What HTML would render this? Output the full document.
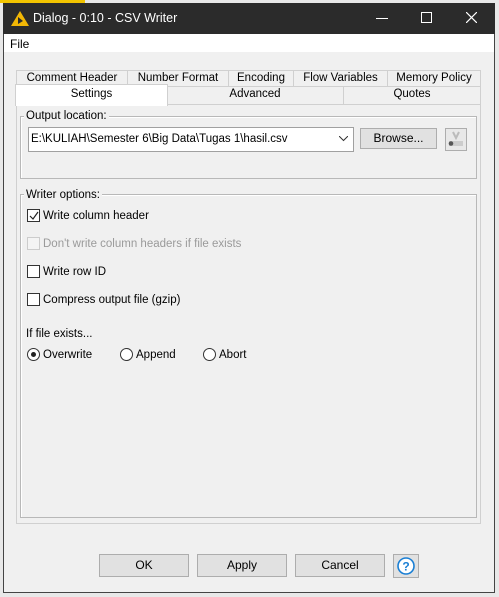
<!DOCTYPE html><html><head><style>
body{margin:0;width:499px;height:597px;background:#e8e8e8;font-family:"Liberation Sans",sans-serif;font-size:12px;color:#000;position:relative;overflow:hidden}
.a{position:absolute}
.win{left:3px;top:3px;width:490px;height:588px;border:1px solid #444;background:#f0f0f0}
.title{left:3px;top:3px;width:492px;height:31px;background:#2b2b2b;color:#fff;font-size:12px}
.tab{position:absolute;border:1px solid #d0d0d0;border-bottom:none;background:#f0f0f0;text-align:center;line-height:15px;font-size:11.5px}
.btn{position:absolute;background:#e1e1e1;border:1px solid #adadad;text-align:center;box-sizing:border-box}
.cb{position:absolute;width:13px;height:13px;border:1px solid #333;background:#fff;box-sizing:border-box}
.rd{position:absolute;width:13px;height:13px;border:1px solid #333;border-radius:50%;background:#fff;box-sizing:border-box}
.lbl{position:absolute;font-size:11.5px}
</style></head><body>
<div class="a" style="left:0;top:0;width:85px;height:3px;background:#f2c400"></div>
<div class="a win"></div>
<div class="a title">
<svg class="a" style="left:8px;top:8px" width="18" height="15"><polygon points="9,0 18,15 0,15" fill="#f2b705"/><polygon points="7,6 12,10 7,13" fill="#2b2b2b"/></svg>
<div class="a" style="left:30px;top:8px;font-size:12.5px">Dialog - 0:10 - CSV Writer</div>
<div class="a" style="left:373px;top:15px;width:12px;height:1px;background:#fff"></div>
<div class="a" style="left:418px;top:9px;width:9px;height:9px;border:1px solid #fff"></div>
<svg class="a" style="left:463px;top:9px" width="11" height="11"><path d="M0 0L11 11M11 0L0 11" stroke="#fff" stroke-width="1.2"/></svg>
</div>
<div class="a" style="left:4px;top:34px;width:490px;height:18px;background:#fff"></div>
<div class="a" style="left:10px;top:37px">File</div>

<div class="tab" style="left:16px;top:70px;width:110px">Comment Header</div>
<div class="tab" style="left:127px;top:70px;width:100px">Number Format</div>
<div class="tab" style="left:228px;top:70px;width:64px">Encoding</div>
<div class="tab" style="left:293px;top:70px;width:93px">Flow Variables</div>
<div class="tab" style="left:387px;top:70px;width:92px">Memory Policy</div>
<div class="tab" style="left:166px;top:86px;width:176px;height:18px">Advanced</div>
<div class="tab" style="left:343px;top:86px;width:136px;height:18px">Quotes</div>
<div class="a" style="left:16px;top:104px;width:463px;height:418px;border:1px solid #d0d0d0;background:#f0f0f0"></div>
<div class="tab" style="left:15px;top:84px;width:151px;height:21px;background:#fff;border-color:#d0d0d0;line-height:18px">Settings</div>

<div class="a" style="left:20px;top:116px;width:455px;height:61px;border:1px solid #b8b8b8;box-shadow:inset 1px 1px #fff"></div>
<div class="lbl" style="left:24px;top:110px;background:#f0f0f0;padding:0 2px">Output location:</div>
<div class="a" style="left:28px;top:127px;width:324px;height:23px;border:1px solid #a0a0a0;background:#fff"></div>
<div class="lbl" style="left:31px;top:133px">E:\KULIAH\Semester 6\Big Data\Tugas 1\hasil.csv</div>
<svg class="a" style="left:339px;top:136px" width="9" height="6"><path d="M0 0L4.5 4.5L9 0" stroke="#333" fill="none"/></svg>
<div class="btn" style="left:360px;top:128px;width:77px;height:21px;line-height:19px">Browse...</div>
<div class="btn" style="left:445px;top:128px;width:22px;height:23px;background:#e8e8e8"><svg width="20" height="21"><path d="M7 3L10 9L13 3" stroke="#bbb" fill="none" stroke-width="2"/><rect x="3" y="12" width="14" height="5" fill="#ccc"/><circle cx="5" cy="14.5" r="2.3" fill="#555"/></svg></div>

<div class="a" style="left:20px;top:194px;width:455px;height:322px;border:1px solid #b8b8b8;box-shadow:inset 1px 1px #fff"></div>
<div class="lbl" style="left:24px;top:189px;background:#f0f0f0;padding:0 2px">Writer options:</div>
<div class="cb" style="left:27px;top:209px"><svg class="a" style="left:1px;top:1px" width="10" height="10"><path d="M1 5L4 8L9 1" stroke="#222" fill="none" stroke-width="1.2"/></svg></div>
<div class="lbl" style="left:43px;top:210px">Write column header</div>
<div class="cb" style="left:27px;top:237px;border-color:#ccc;background:#f4f4f4"></div>
<div class="lbl" style="left:43px;top:238px;color:#9a9a9a">Don't write column headers if file exists</div>
<div class="cb" style="left:27px;top:265px"></div>
<div class="lbl" style="left:43px;top:266px">Write row ID</div>
<div class="cb" style="left:27px;top:293px"></div>
<div class="lbl" style="left:43px;top:294px">Compress output file (gzip)</div>
<div class="lbl" style="left:26px;top:328px">If file exists...</div>
<div class="rd" style="left:27px;top:348px"><div class="a" style="left:3px;top:3px;width:5px;height:5px;border-radius:50%;background:#222"></div></div>
<div class="lbl" style="left:43px;top:349px">Overwrite</div>
<div class="rd" style="left:120px;top:348px"></div>
<div class="lbl" style="left:136px;top:349px">Append</div>
<div class="rd" style="left:203px;top:348px"></div>
<div class="lbl" style="left:219px;top:349px">Abort</div>

<div class="btn" style="left:99px;top:554px;width:90px;height:23px;line-height:21px">OK</div>
<div class="btn" style="left:197px;top:554px;width:90px;height:23px;line-height:21px">Apply</div>
<div class="btn" style="left:295px;top:554px;width:90px;height:23px;line-height:21px">Cancel</div>
<div class="btn" style="left:393px;top:554px;width:26px;height:24px"><svg width="24" height="22"><circle cx="12" cy="11" r="8" fill="#fff" stroke="#1a7fd4" stroke-width="1.6"/><text x="12" y="15.5" font-size="12" font-weight="bold" text-anchor="middle" fill="#1a7fd4" font-family="Liberation Sans">?</text></svg></div>
</body></html>
